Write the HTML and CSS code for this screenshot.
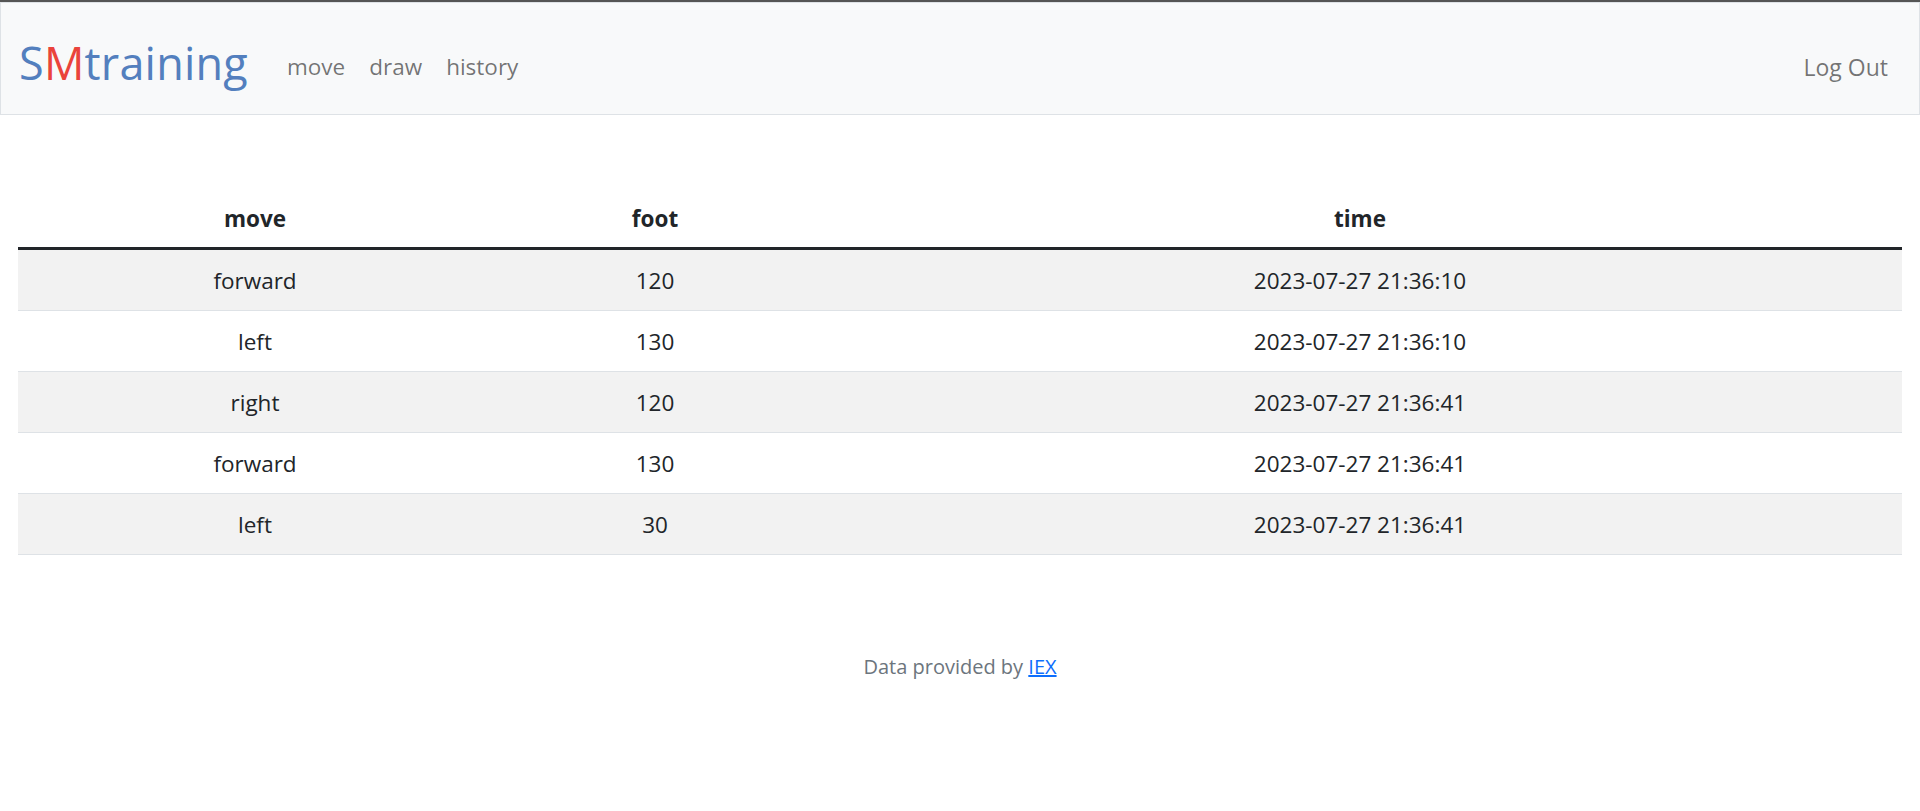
FILE: index.html
```html
<!DOCTYPE html>
<html lang="en">
<head>
<meta charset="utf-8">
<title>SMtraining: History</title>
<link rel="stylesheet" href="styles.css">
</head>
<body>
<nav class="navbar">
  <a class="brand" href="#"><span class="blue">S</span><span class="red">M</span><span class="blue">training</span></a>
  <ul class="nav-links">
    <li><a class="nav-link" href="#">move</a></li>
    <li><a class="nav-link" href="#">draw</a></li>
    <li><a class="nav-link" href="#">history</a></li>
  </ul>
  <ul class="nav-links nav-right">
    <li><a class="nav-link" href="#">Log Out</a></li>
  </ul>
</nav>
<main class="container">
  <table class="table">
    <colgroup>
      <col class="c1"><col class="c2"><col class="c3">
    </colgroup>
    <thead>
      <tr><th>move</th><th>foot</th><th>time</th></tr>
    </thead>
    <tbody>
      <tr><td>forward</td><td>120</td><td>2023-07-27 21:36:10</td></tr>
      <tr><td>left</td><td>130</td><td>2023-07-27 21:36:10</td></tr>
      <tr><td>right</td><td>120</td><td>2023-07-27 21:36:41</td></tr>
      <tr><td>forward</td><td>130</td><td>2023-07-27 21:36:41</td></tr>
      <tr><td>left</td><td>30</td><td>2023-07-27 21:36:41</td></tr>
    </tbody>
  </table>
</main>
<footer class="footer">
  Data provided by <a href="#">IEX</a>
</footer>
</body>
</html>
```
FILE: styles.css
```css
html, body {
  margin: 0;
  padding: 0;
}
body {
  font-family: "Open Sans", "Noto Sans", sans-serif;
  color: #212529;
  background: #fff;
  border-top: 2px solid #555;
}
.navbar {
  display: flex;
  align-items: flex-start;
  box-sizing: border-box;
  height: 113px;
  padding: 26px 31px 0 18px;
  background: #f8f9fa;
  border: 1px solid #dee2e6;
}
.brand {
  font-size: 45px;
  line-height: 1.5;
  text-decoration: none;
  letter-spacing: 0.2px;
}
.blue { color: #537fbe; }
.red { color: #ea433b; }
.nav-links {
  display: flex;
  list-style: none;
  margin: 21px 0 0 27px;
  padding: 0;
}
.nav-right {
  margin-left: auto;
}
.nav-link {
  display: block;
  padding: 0 12px;
  font-size: 22.5px;
  line-height: 1.5;
  color: rgba(0, 0, 0, 0.55);
  text-decoration: none;
}
.nav-right .nav-link {
  padding-right: 0;
  font-size: 23px;
}
.container {
  padding: 75px 18px 0;
}
.table {
  width: 100%;
  border-collapse: collapse;
  table-layout: fixed;
}
.c1 { width: 474px; }
.c2 { width: 326px; }
th, td {
  text-align: center;
  font-size: 22.5px;
  line-height: 32px;
}
th {
  font-weight: 700;
  padding: 13px 8px 12px;
  border-bottom: 3px solid #212529;
}
td {
  padding: 14.5px 8px 13.5px;
  border-bottom: 1px solid #dee2e6;
}
tbody tr:nth-child(odd) td {
  background: #f2f2f2;
}
.footer {
  margin-top: 97px;
  text-align: center;
  font-size: 20px;
  line-height: 1.5;
  color: #6c757d;
}
.footer a {
  color: #0d6efd;
}
```
